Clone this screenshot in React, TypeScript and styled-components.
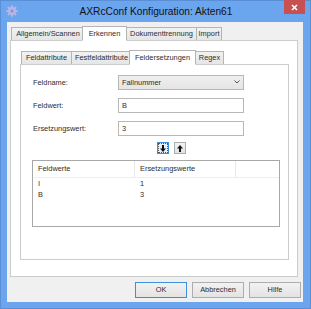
import React from 'react';
import styled, { createGlobalStyle } from 'styled-components';

const Global = createGlobalStyle`
  html, body {
    margin: 0;
    padding: 0;
    background: #ffffff;
  }
  body {
    font-family: "Liberation Sans", Arial, sans-serif;
    font-size: 7.4px;
    color: #2c2c2c;
  }
`;

const Window = styled.div`
  width: 311px;
  height: 309px;
  box-sizing: border-box;
  background: #6ba5ee;
  border: 1px solid #5a8fd6;
  display: flex;
  flex-direction: column;
`;

const TitleBar = styled.div`
  height: 21px;
  display: flex;
  align-items: flex-start;
`;

const IconSlot = styled.div`
  width: 27px;
  padding: 4px 0 0 5px;
  box-sizing: border-box;
  display: flex;
`;

const Title = styled.div`
  flex: 1;
  text-align: center;
  font-size: 10.2px;
  line-height: 21px;
  color: #111;
`;

const CloseButton = styled.div`
  width: 21px;
  height: 14px;
  margin-right: 5px;
  margin-top: -1px;
  background: #c75050;
  display: flex;
  align-items: center;
  justify-content: center;
`;

const Client = styled.div`
  flex: 1;
  margin: 0 7px 6px 6px;
  background: #f0f0f0;
  display: flex;
  flex-direction: column;
  padding: 3px 2px 4px 3px;
`;

const Tabs = styled.div<{ $inner?: boolean }>`
  display: flex;
  flex-direction: column;
  flex: ${p => (p.$inner ? '0 0 auto' : '1')};
  margin-right: ${p => (p.$inner ? '0' : '3px')};
  height: ${p => (p.$inner ? '211px' : 'auto')};
`;

const TabStrip = styled.div`
  display: flex;
  align-items: flex-end;
  height: 15px;
  padding-left: 1px;
  position: relative;
  z-index: 1;
`;

const Tab = styled.div<{ $active?: boolean; $w: number }>`
  width: ${p => p.$w}px;
  box-sizing: border-box;
  height: ${p => (p.$active ? 15 : 13)}px;
  margin: ${p => (p.$active ? '0 -1px -1px -2px' : '0')};
  padding-top: ${p => (p.$active ? 2 : 1)}px;
  text-align: center;
  white-space: nowrap;
  border: 1px solid #b4b4b4;
  border-bottom: ${p => (p.$active ? '1px solid #ffffff' : 'none')};
  border-right: ${p => (p.$active ? '1px solid #b4b4b4' : 'none')};
  background: ${p =>
    p.$active ? '#ffffff' : 'linear-gradient(#f2f2f2, #e5e5e5)'};
  &:last-child {
    border-right: 1px solid #b4b4b4;
  }
`;

const Panel = styled.div<{ $inner?: boolean }>`
  flex: 1;
  background: #ffffff;
  border: 1px solid #cccccc;
  display: flex;
  flex-direction: column;
  padding: ${p => (p.$inner ? '9px 8px 0 12px' : '8px 8px 0 9px')};
`;

const Form = styled.div`
  display: grid;
  grid-template-columns: 85px 126px;
  row-gap: 7px;
  align-items: center;
`;

const Label = styled.div`
  line-height: 15px;
  padding-top: 1px;
`;

const Field = styled.div<{ $combo?: boolean }>`
  height: 15px;
  box-sizing: border-box;
  border: 1px solid #b8b8b8;
  background: ${p => (p.$combo ? 'linear-gradient(#f0f0f0, #e4e4e4)' : '#ffffff')};
  padding: 0 3px;
  line-height: 13px;
  display: flex;
  align-items: center;
  justify-content: space-between;
`;

const ArrowRow = styled.div`
  display: flex;
  gap: 5px;
  margin: 6px 0 0 124px;
`;

const ArrowButton = styled.div<{ $focus?: boolean }>`
  width: 12px;
  height: 12px;
  box-sizing: border-box;
  border: 1px solid ${p => (p.$focus ? '#3c8fd8' : '#adadad')};
  background: ${p => (p.$focus ? '#e3f0fb' : 'linear-gradient(#f2f2f2, #e3e3e3)')};
  display: flex;
  align-items: center;
  justify-content: center;
  outline: ${p => (p.$focus ? '1px dotted #555' : 'none')};
  outline-offset: -2px;
`;

const List = styled.div`
  margin: 6px 0 0 -1px;
  height: 67px;
  box-sizing: border-box;
  border: 1px solid #a8a8a8;
  background: #ffffff;
`;

const ListHeader = styled.div`
  display: grid;
  grid-template-columns: 102px 101px 1fr;
  height: 16px;
  border-bottom: 1px solid #eeeeee;
`;

const HeaderCell = styled.div`
  padding-left: 5px;
  line-height: 16px;
  border-right: 1px solid #e8e8e8;
  &:last-child {
    border-right: none;
  }
`;

const ListRow = styled.div`
  display: grid;
  grid-template-columns: 102px 101px 1fr;
  height: 11px;
  line-height: 11px;
  &:first-of-type {
    margin-top: 2px;
  }
`;

const Cell = styled.div`
  padding-left: 5px;
`;

const Footer = styled.div`
  display: flex;
  justify-content: flex-end;
  gap: 5px;
  margin-top: 5px;
`;

const DialogButton = styled.div<{ $default?: boolean }>`
  width: 52px;
  height: 16px;
  box-sizing: border-box;
  border: 1px solid ${p => (p.$default ? '#3c8fd8' : '#adadad')};
  background: linear-gradient(#f2f2f2, #e3e3e3);
  text-align: center;
  line-height: 14px;
`;

const Gear = () => {
  const teeth = Array.from({ length: 8 }, (_, i) => i * 45);
  return (
    <svg width="12" height="12" viewBox="0 0 12 12">
      {teeth.map(a => (
        <rect
          key={a}
          x="5"
          y="0.3"
          width="2"
          height="3"
          fill="#b4b6e6"
          transform={`rotate(${a} 6 6)`}
        />
      ))}
      <circle cx="6" cy="6" r="4" fill="#b4b6e6" />
      <circle cx="6" cy="6" r="1.6" fill="#8e91d2" />
    </svg>
  );
};

const CloseIcon = () => (
  <svg width="7" height="7" viewBox="0 0 7 7">
    <path d="M1 1 L6 6 M6 1 L1 6" stroke="#ffffff" strokeWidth="1.6" />
  </svg>
);

const Chevron = () => (
  <svg width="6" height="4" viewBox="0 0 6 4">
    <path d="M0.5 0.5 L3 3 L5.5 0.5" stroke="#555" strokeWidth="1" fill="none" />
  </svg>
);

const Arrow = ({ down }: { down?: boolean }) => (
  <svg width="6" height="7" viewBox="0 0 6 7">
    <g transform={down ? '' : 'rotate(180 3 3.5)'}>
      <rect x="2" y="0" width="2" height="4" fill="#111" />
      <path d="M0 3.5 L6 3.5 L3 7 Z" fill="#111" />
    </g>
  </svg>
);

const outerTabs = [
  { label: 'Allgemein/Scannen', w: 73 },
  { label: 'Erkennen', w: 45, active: true },
  { label: 'Dokumenttrennung', w: 70 },
  { label: 'Import', w: 26 },
];

const innerTabs = [
  { label: 'Feldattribute', w: 50 },
  { label: 'Festfeldattribute', w: 60 },
  { label: 'Feldersetzungen', w: 67, active: true },
  { label: 'Regex', w: 29 },
];

const rows = [
  ['I', '1'],
  ['B', '3'],
];

export default function App() {
  return (
    <>
      <Global />
      <Window>
        <TitleBar>
          <IconSlot>
            <Gear />
          </IconSlot>
          <Title>AXRcConf Konfiguration: Akten61</Title>
          <CloseButton>
            <CloseIcon />
          </CloseButton>
        </TitleBar>
        <Client>
          <Tabs>
            <TabStrip>
              {outerTabs.map(t => (
                <Tab key={t.label} $w={t.w} $active={t.active}>
                  {t.label}
                </Tab>
              ))}
            </TabStrip>
            <Panel>
              <Tabs $inner>
                <TabStrip>
                  {innerTabs.map(t => (
                    <Tab key={t.label} $w={t.w} $active={t.active}>
                      {t.label}
                    </Tab>
                  ))}
                </TabStrip>
                <Panel $inner>
                  <Form>
                    <Label>Feldname:</Label>
                    <Field $combo>
                      <span>Fallnummer</span>
                      <Chevron />
                    </Field>
                    <Label>Feldwert:</Label>
                    <Field>B</Field>
                    <Label>Ersetzungswert:</Label>
                    <Field>3</Field>
                  </Form>
                  <ArrowRow>
                    <ArrowButton $focus>
                      <Arrow down />
                    </ArrowButton>
                    <ArrowButton>
                      <Arrow />
                    </ArrowButton>
                  </ArrowRow>
                  <List>
                    <ListHeader>
                      <HeaderCell>Feldwerte</HeaderCell>
                      <HeaderCell>Ersetzungswerte</HeaderCell>
                      <HeaderCell />
                    </ListHeader>
                    {rows.map(([a, b]) => (
                      <ListRow key={a}>
                        <Cell>{a}</Cell>
                        <Cell>{b}</Cell>
                      </ListRow>
                    ))}
                  </List>
                </Panel>
              </Tabs>
            </Panel>
          </Tabs>
          <Footer>
            <DialogButton $default>OK</DialogButton>
            <DialogButton>Abbrechen</DialogButton>
            <DialogButton>Hilfe</DialogButton>
          </Footer>
        </Client>
      </Window>
    </>
  );
}
